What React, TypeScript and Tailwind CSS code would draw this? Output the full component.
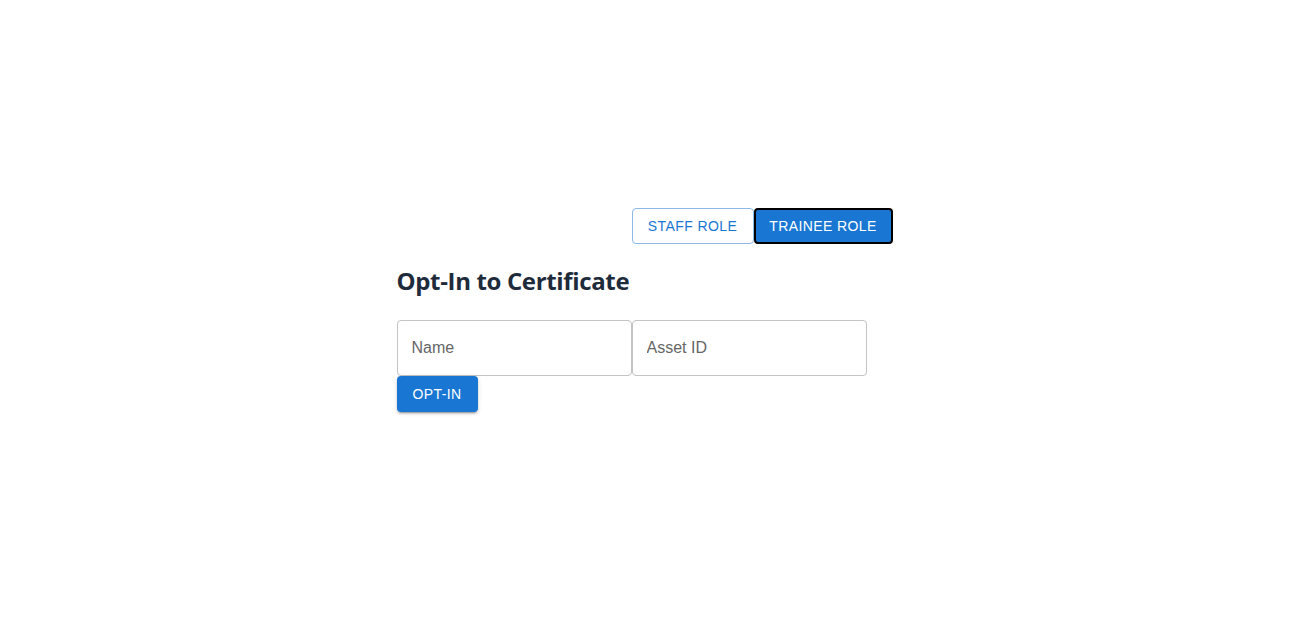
const sans = { fontFamily: "'Liberation Sans', Arial, sans-serif" };

export default function App() {
  return (
    <div className="min-h-[620px] flex items-center justify-center bg-white" style={sans}>
      <div className="w-[500px] pr-1 flex flex-col">
        {/* Role switch */}
        <div className="flex justify-end">
          <button className="h-9 w-[122px] rounded border border-[#1976d280] text-[#1976d2] text-sm uppercase tracking-[0.4px]">
            Staff Role
          </button>
          <button className="h-9 w-[139px] rounded border-2 border-black bg-[#1976d2] text-white text-sm uppercase tracking-[0.4px]">
            Trainee Role
          </button>
        </div>

        {/* Title */}
        <h2
          className="mt-[21px] text-[24px] leading-8 font-bold tracking-[-0.35px] text-[#1e2b3b]"
          style={{ fontFamily: "'Open Sans', sans-serif" }}
        >
          Opt-In to Certificate
        </h2>

        {/* Form */}
        <div className="mt-[23px] flex">
          <input
            placeholder="Name"
            className="w-[235px] h-14 px-[14px] rounded border border-[#c4c4c4] text-base text-[#222] placeholder:text-[#666] outline-none"
          />
          <input
            placeholder="Asset ID"
            className="w-[235px] h-14 px-[14px] rounded border border-[#c4c4c4] text-base text-[#222] placeholder:text-[#666] outline-none"
          />
        </div>
        <div>
          <button className="h-9 w-[81px] rounded bg-[#1976d2] text-white text-sm uppercase tracking-[0.4px] shadow-[0_3px_1px_-2px_rgba(0,0,0,0.2),0_2px_2px_0_rgba(0,0,0,0.14),0_1px_5px_0_rgba(0,0,0,0.12)]">
            Opt-In
          </button>
        </div>
      </div>
    </div>
  );
}
